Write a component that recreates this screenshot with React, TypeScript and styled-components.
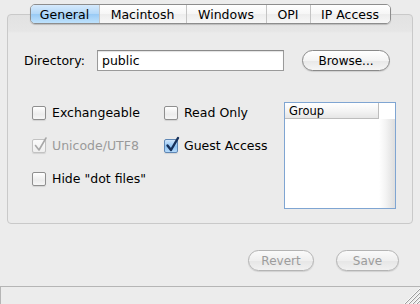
import React from "react";
import styled, { createGlobalStyle } from "styled-components";

const Global = createGlobalStyle`
  html, body { margin: 0; padding: 0; background: #ececec; }
  body { font-family: "DejaVu Sans", "Liberation Sans", sans-serif; font-size: 12px; color: #000; }
`;

const Window = styled.div`
  width: 420px;
  height: 304px;
  display: flex;
  flex-direction: column;
  background: #ececec;
  overflow: hidden;
`;

const Main = styled.div`
  flex: 1;
  display: flex;
  flex-direction: column;
  padding-top: 4px;
`;

const TabBar = styled.div`
  display: flex;
  justify-content: center;
  position: relative;
  z-index: 1;
  margin-bottom: -10px;
`;

const TabStrip = styled.div`
  display: flex;
  height: 20px;
  border: 1px solid #8d8d8d;
  border-radius: 5px;
  overflow: hidden;
  box-shadow: 0 1px 1px rgba(0,0,0,0.18);
  box-sizing: border-box;
`;

const Tab = styled.div<{ $active?: boolean; $w: number }>`
  width: ${p => p.$w}px;
  display: flex;
  align-items: center;
  justify-content: center;
  font-size: 12.5px;
  box-sizing: border-box;
  border-left: 1px solid ${p => (p.$active ? "#6e95c2" : "#c4c4c4")};
  &:first-child { border-left: none; }
  background: ${p =>
    p.$active
      ? "linear-gradient(#d6eafc 0%, #b2d7f8 50%, #99caf5 52%, #bfe2fc 100%)"
      : "linear-gradient(#ffffff 0%, #f6f6f6 50%, #ededed 52%, #f7f7f7 100%)"};
`;

const Panel = styled.div`
  margin: 0 7px;
  height: 210px;
  box-sizing: border-box;
  border: 1px solid #c9c9c9;
  border-radius: 4px;
  background: linear-gradient(#e2e2e2 0px, #e6e6e6 16px, #ebebeb 18px, #ebebeb 100%);
  padding: 35px 16px 0 16px;
  display: flex;
  flex-direction: column;
`;

const DirRow = styled.div`
  display: flex;
  align-items: center;
  height: 21px;
`;

const Label = styled.span`
  width: 73px;
  font-size: 12.5px;
`;

const TextField = styled.div`
  width: 187px;
  height: 21px;
  box-sizing: border-box;
  border: 1px solid #9a9a9a;
  border-top-color: #8a8a8a;
  background: #fff;
  box-shadow: inset 0 1px 1px rgba(0,0,0,0.12);
  display: flex;
  align-items: center;
  padding-left: 4px;
  font-size: 12.5px;
`;

const PillButton = styled.div<{ $w: number; $disabled?: boolean }>`
  width: ${p => p.$w}px;
  height: 21px;
  box-sizing: border-box;
  border: 1px solid ${p => (p.$disabled ? "#b4b4b4" : "#8a8a8a")};
  border-radius: 11px;
  background: ${p =>
    p.$disabled
      ? "linear-gradient(#fafafa 0%, #efefef 50%, #e6e6e6 52%, #f1f1f1 100%)"
      : "linear-gradient(#ffffff 0%, #f4f4f4 50%, #e8e8e8 52%, #f6f6f6 100%)"};
  color: ${p => (p.$disabled ? "#9c9c9c" : "#000")};
  display: flex;
  align-items: center;
  justify-content: center;
  font-size: 12px;
  box-shadow: 0 1px 1px rgba(0,0,0,0.12);
`;

const BrowseWrap = styled.div`
  margin-left: 18px;
`;

const Lower = styled.div`
  display: flex;
  margin-top: 25px;
`;

const CheckGrid = styled.div`
  display: grid;
  grid-template-columns: 132px auto;
  grid-auto-rows: 33px;
  margin-left: 8px;
  align-content: start;
`;

const CheckItem = styled.div<{ $disabled?: boolean }>`
  display: flex;
  align-items: center;
  gap: 6px;
  height: 33px;
  color: ${p => (p.$disabled ? "#9a9a9a" : "#000")};
  font-size: 12.5px;
  white-space: nowrap;
`;

const Box = styled.div<{ $checked?: boolean; $disabled?: boolean }>`
  width: 14px;
  height: 14px;
  box-sizing: border-box;
  border: 1px solid ${p => (p.$disabled ? "#c2c2c2" : p.$checked ? "#5f87b5" : "#8f8f8f")};
  border-radius: 2px;
  background: ${p =>
    p.$checked && !p.$disabled
      ? "linear-gradient(#cfe5fb, #8ec3f3 55%, #b6dafa)"
      : p.$disabled
      ? "linear-gradient(#fbfbfb, #efefef)"
      : "linear-gradient(#ffffff, #ececec 60%, #f6f6f6)"};
  position: relative;
  box-shadow: 0 1px 1px rgba(0,0,0,0.1);
  flex-shrink: 0;
`;

const Check = styled.svg`
  position: absolute;
  left: 0px;
  top: -4px;
  width: 15px;
  height: 17px;
  overflow: visible;
`;

const List = styled.div`
  margin-left: auto;
  margin-top: 6px;
  width: 112px;
  height: 107px;
  box-sizing: border-box;
  border: 1px solid #7fa5d2;
  background: #fff;
  display: flex;
`;

const ListColumn = styled.div`
  width: 94px;
  display: flex;
  flex-direction: column;
`;

const ListHeader = styled.div`
  height: 16px;
  box-sizing: border-box;
  border-bottom: 1px solid #bdbdbd;
  border-right: 1px solid #bdbdbd;
  background: linear-gradient(#ffffff, #f2f2f2 60%, #e6e6e6);
  font-size: 11.5px;
  padding-left: 4px;
  display: flex;
  align-items: center;
`;

const ScrollTrack = styled.div`
  flex: 1;
  display: flex;
  flex-direction: column;
`;

const ScrollCorner = styled.div`
  height: 16px;
  background: #fff;
`;

const ScrollBody = styled.div`
  flex: 1;
  background: linear-gradient(90deg, #ffffff 0%, #f4f4f4 40%, #dedede 100%);
`;

const ButtonRow = styled.div`
  display: flex;
  justify-content: flex-end;
  gap: 22px;
  padding-right: 21px;
  margin-top: 26px;
`;

const StatusBar = styled.div`
  height: 18px;
  border-top: 1px solid #b5b5b5;
  border-left: 1px solid #b5b5b5;
  box-sizing: border-box;
  background: #ececec;
  display: flex;
  justify-content: flex-end;
  align-items: flex-end;
`;

const Grip = styled.svg`
  width: 16px;
  height: 16px;
  display: block;
`;

const CheckMark = ({ disabled }: { disabled?: boolean }) => (
  <Check viewBox="0 0 15 17">
    <path
      d="M2.5 9.5 L6 14 L13 2"
      fill="none"
      stroke={disabled ? "#a8a8a8" : "#16305a"}
      strokeWidth={disabled ? 1.6 : 2.4}
      strokeLinecap="round"
      strokeLinejoin="round"
    />
  </Check>
);

const CheckBox = ({
  label,
  checked,
  disabled,
}: {
  label: string;
  checked?: boolean;
  disabled?: boolean;
}) => (
  <CheckItem $disabled={disabled}>
    <Box $checked={checked} $disabled={disabled}>
      {checked && <CheckMark disabled={disabled} />}
    </Box>
    <span>{label}</span>
  </CheckItem>
);

export default function App() {
  const tabs = [
    { name: "General", w: 68, active: true },
    { name: "Macintosh", w: 87 },
    { name: "Windows", w: 80 },
    { name: "OPI", w: 44 },
    { name: "IP Access", w: 80 },
  ];
  return (
    <>
      <Global />
      <Window>
        <Main>
          <TabBar>
            <TabStrip>
              {tabs.map(t => (
                <Tab key={t.name} $w={t.w} $active={t.active}>
                  {t.name}
                </Tab>
              ))}
            </TabStrip>
          </TabBar>
          <Panel>
            <DirRow>
              <Label>Directory:</Label>
              <TextField>public</TextField>
              <BrowseWrap>
                <PillButton $w={88}>Browse...</PillButton>
              </BrowseWrap>
            </DirRow>
            <Lower>
              <CheckGrid>
                <CheckBox label="Exchangeable" />
                <CheckBox label="Read Only" />
                <CheckBox label="Unicode/UTF8" checked disabled />
                <CheckBox label="Guest Access" checked />
                <CheckBox label={'Hide "dot files"'} />
              </CheckGrid>
              <List>
                <ListColumn>
                  <ListHeader>Group</ListHeader>
                </ListColumn>
                <ScrollTrack>
                  <ScrollCorner />
                  <ScrollBody />
                </ScrollTrack>
              </List>
            </Lower>
          </Panel>
          <ButtonRow>
            <PillButton $w={66} $disabled>Revert</PillButton>
            <PillButton $w={63} $disabled>Save</PillButton>
          </ButtonRow>
        </Main>
        <StatusBar>
          <Grip viewBox="0 0 16 16">
            {[3, 7, 11, 15].map(o => (
              <line key={o} x1={16} y1={16 - o} x2={16 - o} y2={16} stroke="#8a8a8a" strokeWidth={0.8} />
            ))}
            {[4, 8, 12, 16].map(o => (
              <line key={"w" + o} x1={16} y1={16 - o} x2={16 - o} y2={16} stroke="#ffffff" strokeWidth={0.8} />
            ))}
          </Grip>
        </StatusBar>
      </Window>
    </>
  );
}
